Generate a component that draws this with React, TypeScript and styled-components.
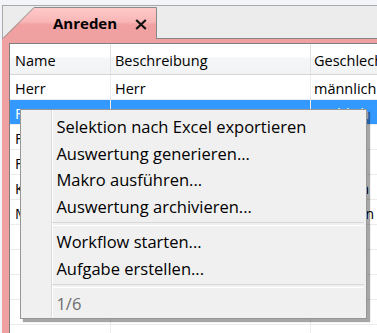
import React from "react";
import styled, { createGlobalStyle } from "styled-components";

const GlobalStyle = createGlobalStyle`
  html, body { margin: 0; padding: 0; background: #f3f3fa; }
  body { font-family: "Open Sans", "Noto Sans", sans-serif; }
  * { box-sizing: border-box; }
`;

const Window = styled.div`
  position: relative;
  width: 377px;
  height: 333px;
  overflow: hidden;
  background: #f3f3fa;
  padding: 5px 0 0 2px;
`;

const TabControl = styled.div`
  display: flex;
  flex-direction: column;
  width: 440px;
  height: 328px;
`;

const TabStrip = styled.div`
  height: 34px;
  flex: none;
  display: flex;
  align-items: flex-end;
  background: #ececec;
  border-top: 1px solid #a9a9a9;
  border-left: 1px solid #a9a9a9;
  border-bottom: 1px solid #858585;
`;

const Tab = styled.div`
  position: relative;
  z-index: 1;
  width: 154px;
  height: 32px;
  margin-bottom: -1px;
`;

const TabShape = styled.svg`
  position: absolute;
  inset: 0;
`;

const TabLabel = styled.div`
  position: relative;
  height: 100%;
  display: flex;
  align-items: center;
  padding-left: 50px;
  gap: 18px;
  font-size: 15px;
  font-weight: 700;
  color: #000;
`;

const CloseIcon = styled.svg`
  margin-top: 2px;
`;

const Body = styled.div`
  flex: 1;
  background: #efa0a0;
  padding: 4px 0 0 7px;
  display: flex;
`;

const Table = styled.div`
  flex: 1;
  background: #fff;
  border-top: 1px solid #7f7f7f;
  border-left: 1px solid #7f7f7f;
  display: flex;
  flex-direction: column;
  font-size: 14.5px;
`;

const HeaderRow = styled.div`
  display: grid;
  grid-template-columns: 101px 200px 200px;
  height: 31px;
  flex: none;
  border-bottom: 1px solid #d5d5d5;
  background: linear-gradient(#ffffff 0%, #ffffff 42%, #f5f6f7 48%, #f2f3f4 100%);
`;

const HeaderCell = styled.div<{ $pad: number }>`
  display: flex;
  align-items: center;
  padding: 3px 0 0 ${(p) => p.$pad}px;
  border-right: 1px solid #e3e3e3;
  color: #000;
  white-space: nowrap;
  overflow: hidden;
`;

const Row = styled.div<{ $selected?: boolean }>`
  display: grid;
  grid-template-columns: 101px 200px 200px;
  height: 25px;
  flex: none;
  border-bottom: 1px solid #ebebeb;
  background: ${(p) => (p.$selected ? "#3399ff" : "#ffffff")};
  color: ${(p) => (p.$selected ? "#ffffff" : "#000000")};
`;

const Cell = styled.div<{ $pad: number }>`
  display: flex;
  align-items: center;
  padding: 2px 0 0 ${(p) => p.$pad}px;
  border-right: 1px solid #ececec;
  white-space: nowrap;
  overflow: hidden;
`;

const Menu = styled.div`
  position: absolute;
  left: 20px;
  top: 109px;
  width: 347px;
  height: 210px;
  border: 1px solid #979797;
  background-color: #f0f0f0;
  background-image: linear-gradient(
    90deg,
    transparent 30px,
    #dadada 30px,
    #dadada 31px,
    #ffffff 31px,
    #ffffff 32px,
    transparent 32px
  );
  box-shadow: 3px 3px 1px rgba(0, 0, 0, 0.35);
  padding-top: 3.3px;
  font-size: 16.5px;
`;

const MenuItem = styled.div<{ $disabled?: boolean }>`
  height: 26.67px;
  display: flex;
  align-items: center;
  padding-left: 35.4px;
  color: ${(p) => (p.$disabled ? "#6d6d6d" : "#000000")};
  white-space: nowrap;
`;

const MenuSeparator = styled.div`
  height: 8.67px;
  display: flex;
  align-items: center;
  margin: 0 2px 0 31px;
  &::before {
    content: "";
    flex: 1;
    height: 2px;
    border-top: 1px solid #d7d7d7;
    border-bottom: 1px solid #ffffff;
  }
`;

const rows: [string, string, string][] = [
  ["Herr", "Herr", "männlich"],
  ["Frau", "Frau", "weiblich"],
  ["Firma", "Firma", ""],
  ["Familie", "Familie", ""],
  ["Kauffrau", "Kauffrau", "weiblich"],
  ["Mitarbeiter", "Mitarbeiter", "Gruppen"],
  ["", "", ""],
  ["", "", ""],
  ["", "", ""],
  ["", "", ""],
  ["", "", ""],
];

export default function App() {
  return (
    <>
      <GlobalStyle />
      <Window>
        <TabControl>
          <TabStrip>
            <Tab>
              <TabShape width="154" height="32" viewBox="0 0 154 32">
                <defs>
                  <linearGradient id="tabfill" x1="0" y1="0" x2="0" y2="1">
                    <stop offset="0" stopColor="#ffcaca" />
                    <stop offset="0.45" stopColor="#f9b6b6" />
                    <stop offset="0.55" stopColor="#f1a1a1" />
                    <stop offset="1" stopColor="#efa0a0" />
                  </linearGradient>
                </defs>
                <path d="M0,32 L0,31 L31,0.5 L153.5,0.5 L153.5,32 Z" fill="url(#tabfill)" />
                <path
                  d="M0.5,31 L31,0.5 L153.5,0.5 L153.5,32"
                  fill="none"
                  stroke="#8a8a8a"
                  strokeWidth="1"
                />
              </TabShape>
              <TabLabel>
                <span>Anreden</span>
                <CloseIcon width="12" height="11" viewBox="0 0 12 11">
                  <path d="M1.2,1 L10.8,10 M10.8,1 L1.2,10" stroke="#111" strokeWidth="2.2" />
                </CloseIcon>
              </TabLabel>
            </Tab>
          </TabStrip>
          <Body>
            <Table>
              <HeaderRow>
                <HeaderCell $pad={5}>Name</HeaderCell>
                <HeaderCell $pad={4}>Beschreibung</HeaderCell>
                <HeaderCell $pad={3}>Geschlecht</HeaderCell>
              </HeaderRow>
              {rows.map((r, i) => (
                <Row key={i} $selected={i === 1}>
                  <Cell $pad={5}>{r[0]}</Cell>
                  <Cell $pad={4}>{r[1]}</Cell>
                  <Cell $pad={3}>{r[2]}</Cell>
                </Row>
              ))}
            </Table>
          </Body>
        </TabControl>
        <Menu>
          <MenuItem>Selektion nach Excel exportieren</MenuItem>
          <MenuItem>Auswertung generieren...</MenuItem>
          <MenuItem>Makro ausführen...</MenuItem>
          <MenuItem>Auswertung archivieren...</MenuItem>
          <MenuSeparator />
          <MenuItem>Workflow starten...</MenuItem>
          <MenuItem>Aufgabe erstellen...</MenuItem>
          <MenuSeparator />
          <MenuItem $disabled>1/6</MenuItem>
        </Menu>
      </Window>
    </>
  );
}
